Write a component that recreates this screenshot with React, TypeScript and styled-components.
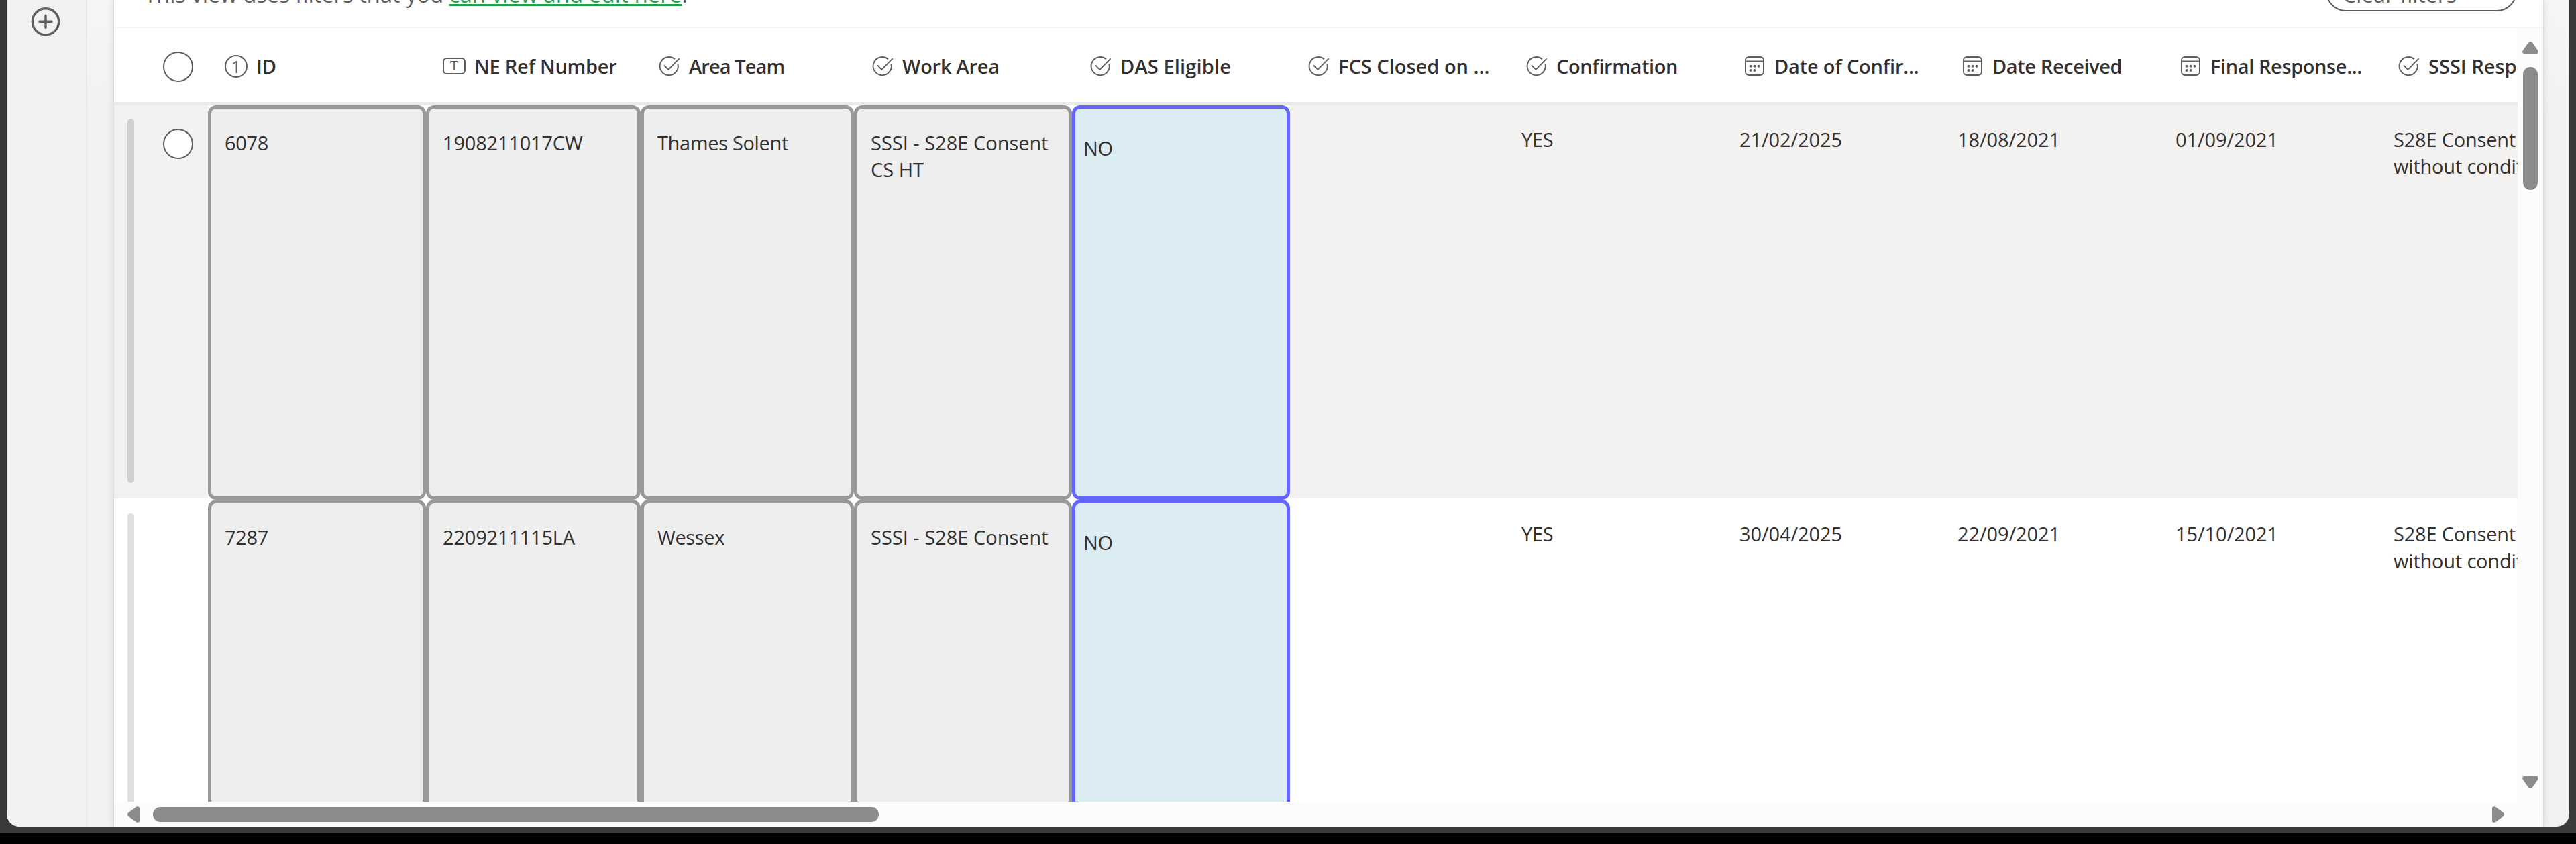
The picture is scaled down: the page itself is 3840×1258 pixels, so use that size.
import React from "react";
import styled, { createGlobalStyle, css } from "styled-components";

const GlobalStyle = createGlobalStyle`
  *, *::before, *::after { box-sizing: border-box; }
  body {
    margin: 0;
    background: #000;
    color: #323130;
    font-family: "Segoe UI", "Open Sans", "Noto Sans", sans-serif;
    font-size: 29px;
    line-height: 40px;
    overflow: hidden;
  }
`;

const Desktop = styled.div`
  width: 3840px;
  height: 1258px;
  background: #000;
`;

const Frame = styled.div`
  height: 1242px;
  padding: 0 10px 10px;
  background: #3a3a3a;
`;

const AppWindow = styled.div`
  display: flex;
  height: 1232px;
  border-radius: 0 0 19px 19px;
  overflow: hidden;
  background: linear-gradient(#f6f6f5 0, #f3f2f1 170px);
`;

const Rail = styled.nav`
  display: flex;
  justify-content: center;
  width: 120px;
  padding: 10px 2px 0 0;
  border-right: 2px solid #ebeae9;
  background: #f3f2f1;
`;

const AddButton = styled.button`
  width: 44px;
  height: 44px;
  padding: 0;
  border: 0;
  background: none;
`;

const Card = styled.main`
  display: flex;
  flex-direction: column;
  width: 3621px;
  margin-left: 40px;
  background: #fff;
  box-shadow: 0 0 12px rgba(0, 0, 0, 0.12), 0 0 3px rgba(0, 0, 0, 0.12);
`;

const FilterBar = styled.div`
  display: flex;
  flex: none;
  justify-content: space-between;
  align-items: flex-start;
  height: 42px;
  padding: 0 39px 0 45px;
  border-bottom: 2px solid #f6f6f6;
  overflow: hidden;
`;

const FilterNote = styled.div`
  margin-top: -31px;
  font-size: 33px;
  line-height: 45px;
  letter-spacing: -0.14px;
  color: #605e5c;
  white-space: nowrap;
`;

const FilterLink = styled.a`
  color: #21a54b;
  letter-spacing: 0.04px;
  text-decoration: underline;
  text-decoration-thickness: 3px;
  text-underline-offset: 2px;
`;

const ClearButton = styled.button`
  width: 285px;
  height: 60px;
  margin-top: -43px;
  padding: 9px 0 0 23px;
  border: 2px solid #605e5c;
  border-radius: 30px;
  background: #fff;
  color: #605e5c;
  font: 400 32px/44px "Segoe UI", "Open Sans", sans-serif;
  text-align: left;
`;

const GridArea = styled.section`
  display: grid;
  grid-template-columns: 3583px 38px;
  grid-template-rows: 1153px 37px;
`;

const Table = styled.div`
  display: flex;
  flex-direction: column;
  overflow: hidden;
`;

const columnTemplate = css`
  display: grid;
  flex: none;
  grid-template-columns: 140px 325px 320px 318px repeat(8, 325px);
`;

const HeaderRow = styled.div`
  ${columnTemplate}
  height: 115px;
  border-bottom: 5px solid #eaeaea;
`;

const HeaderLead = styled.div`
  display: flex;
  align-items: flex-start;
  padding: 35px 0 0 73px;
`;

const HeaderCell = styled.div`
  display: flex;
  align-items: center;
  gap: 11px;
  padding: 3px 0 0 25px;
`;

const HeaderLabel = styled.span<{ $track?: number }>`
  font-weight: 600;
  letter-spacing: ${(p) => p.$track ?? 0}px;
  white-space: nowrap;
`;

const IconSlot = styled.span`
  display: flex;
  flex: none;
  align-items: center;
  width: 36px;
  height: 36px;
  color: #605e5c;
`;

const NumberBadge = styled.span`
  display: flex;
  align-items: center;
  justify-content: center;
  width: 34px;
  height: 34px;
  border: 2px solid currentColor;
  border-radius: 50%;
  font: 400 26px/28px "Segoe UI", "Open Sans", sans-serif;
`;

const TextBadge = styled.span`
  display: flex;
  align-items: center;
  justify-content: center;
  width: 34px;
  height: 25px;
  border: 2px solid currentColor;
  border-radius: 6px;
  font: 400 18px/21px "DejaVu Serif", serif;
`;

const Row = styled.div<{ $shaded?: boolean }>`
  ${columnTemplate}
  height: 588px;
  --row-bg: ${(p) => (p.$shaded ? "#f3f2f1" : "#fff")};
  --row-bar: ${(p) => (p.$shaded ? "#d0d0cf" : "#e0dfde")};
`;

const RowLead = styled.div`
  display: flex;
  align-items: flex-start;
  height: 586px;
  padding: 20px 0 0 20px;
  background: var(--row-bg);
`;

const DragBar = styled.div`
  width: 10px;
  height: 543px;
  border-radius: 5px;
  background: var(--row-bar);
`;

const SelectCircle = styled.span<{ $inRow?: boolean }>`
  width: 45px;
  height: 45px;
  margin: ${(p) => (p.$inRow ? "15px 0 0 43px" : "0")};
  border: 2px solid #5f5e5c;
  border-radius: 50%;
  background: #fff;
`;

type Kind = "locked" | "focus" | "plain";

const cellKinds = {
  locked: css`
    padding: 31px 15px 0 20px;
    border: 5px solid #999;
    border-radius: 12px;
    background: #eee;
  `,
  focus: css`
    padding: 39px 11px 0 12px;
    border: 5px solid #6464ff;
    border-radius: 12px;
    background: #dcecf3;
  `,
  plain: css`
    height: 586px;
    padding: 31px 20px 0 20px;
    background: var(--row-bg);
  `,
};

const Cell = styled.div<{ $kind: Kind; $track?: number }>`
  letter-spacing: ${(p) => p.$track ?? 0}px;
  ${(p) => cellKinds[p.$kind]}
`;

const VerticalTrack = styled.div`
  display: flex;
  flex-direction: column;
  align-items: center;
  padding: 20px 0;
  background: #fcfcfc;
`;

const VerticalThumb = styled.div`
  width: 22px;
  height: 183px;
  margin: 20px 0 auto;
  border-radius: 11px;
  background: #8b8b8b;
`;

const HorizontalTrack = styled.div`
  display: flex;
  align-items: center;
  padding: 1px 20px 0 20px;
  background: #fcfcfc;
`;

const HorizontalThumb = styled.div`
  width: 1082px;
  height: 22px;
  margin: 0 auto 0 20px;
  border-radius: 11px;
  background: #8b8b8b;
`;

const TrackCorner = styled.div`
  background: #fcfcfc;
`;

const turns = { up: 0, right: 90, down: 180, left: 270 };

const Arrow = ({ dir }: { dir: keyof typeof turns }) => {
  const upright = dir === "up" || dir === "down";
  return (
    <svg
      width={upright ? 24 : 18}
      height={upright ? 18 : 24}
      viewBox={upright ? "-12 -9 24 18" : "-9 -12 18 24"}
      fill="#8b8b8b"
    >
      <path
        transform={`rotate(${turns[dir]})`}
        d="M-3 -7.4Q0 -10.6 3 -7.4L11.4 4.4Q13 8.6 9 9H-9Q-13 8.6 -11.4 4.4Z"
      />
    </svg>
  );
};

const ChoiceIcon = () => (
  <svg width="36" height="36" viewBox="0 0 36 36" fill="none" stroke="currentColor" strokeWidth="1.9">
    <path d="M25.9 7.2A13.6 13.6 0 1 0 30.4 14.4" />
    <path d="M10 16.4L16.4 22.9L32.6 6.4" />
  </svg>
);

const CalendarIcon = () => (
  <svg width="36" height="36" viewBox="0 0 36 36" fill="none" stroke="currentColor" strokeWidth="2">
    <rect x="4" y="4" width="27" height="27" rx="5" />
    <path d="M4 10.5H31" />
    <g fill="currentColor" stroke="none">
      <circle cx="11.5" cy="17.8" r="2" />
      <circle cx="17.5" cy="17.8" r="2" />
      <circle cx="23.5" cy="17.8" r="2" />
      <circle cx="11.5" cy="24" r="2" />
      <circle cx="17.5" cy="24" r="2" />
    </g>
  </svg>
);

const PlusCircleIcon = () => (
  <svg width="44" height="44" viewBox="0 0 44 44" fill="none" stroke="#605e5c" strokeWidth="3.4" strokeLinecap="round">
    <circle cx="22" cy="22.3" r="19.6" />
    <path d="M22 13.3V31.3M13 22.3H31" />
  </svg>
);

const icons = {
  number: <NumberBadge>1</NumberBadge>,
  text: <TextBadge>T</TextBadge>,
  choice: <ChoiceIcon />,
  date: <CalendarIcon />,
};

type Column = { label: string; icon: keyof typeof icons; kind: Kind; track?: number };

const columns: Column[] = [
  { label: "ID", icon: "number", kind: "locked" },
  { label: "NE Ref Number", icon: "text", kind: "locked", track: -0.25 },
  { label: "Area Team", icon: "choice", kind: "locked", track: -0.9 },
  { label: "Work Area", icon: "choice", kind: "locked", track: -0.25 },
  { label: "DAS Eligible", icon: "choice", kind: "focus", track: 0.15 },
  { label: "FCS Closed on ...", icon: "choice", kind: "plain", track: 0 },
  { label: "Confirmation", icon: "choice", kind: "plain", track: -0.4 },
  { label: "Date of Confir...", icon: "date", kind: "plain", track: -0.2 },
  { label: "Date Received", icon: "date", kind: "plain", track: -0.4 },
  { label: "Final Response...", icon: "date", kind: "plain", track: -0.4 },
  { label: "SSSI Response", icon: "choice", kind: "plain" },
];

const cellTracks = [-0.3, -0.2, -0.35, 0, -0.3, 0, -0.3, -0.1, -0.1, -0.1, -0.2];

const rows = [
  {
    selectable: true,
    values: ["6078", "1908211017CW", "Thames Solent", "SSSI - S28E Consent CS HT", "NO", "", "YES",
      "21/02/2025", "18/08/2021", "01/09/2021", "S28E Consent without conditions"],
  },
  {
    selectable: false,
    values: ["7287", "2209211115LA", "Wessex", "SSSI - S28E Consent", "NO", "", "YES",
      "30/04/2025", "22/09/2021", "15/10/2021", "S28E Consent without conditions"],
  },
];

export default function App() {
  return (
    <Desktop>
      <GlobalStyle />
      <Frame>
        <AppWindow>
          <Rail>
            <AddButton aria-label="Add">
              <PlusCircleIcon />
            </AddButton>
          </Rail>
          <Card>
            <FilterBar>
              <FilterNote>
                This view uses filters that you <FilterLink>can view and edit here</FilterLink>.
              </FilterNote>
              <ClearButton>Clear filters</ClearButton>
            </FilterBar>
            <GridArea>
              <Table>
                <HeaderRow>
                  <HeaderLead>
                    <SelectCircle />
                  </HeaderLead>
                  {columns.map((c) => (
                    <HeaderCell key={c.label}>
                      <IconSlot>{icons[c.icon]}</IconSlot>
                      <HeaderLabel $track={c.track}>{c.label}</HeaderLabel>
                    </HeaderCell>
                  ))}
                </HeaderRow>
                {rows.map((row) => (
                  <Row key={row.values[0]} $shaded={row.selectable}>
                    <RowLead>
                      <DragBar />
                      {row.selectable && <SelectCircle $inRow />}
                    </RowLead>
                    {row.values.map((v, i) => (
                      <Cell key={columns[i].label} $kind={columns[i].kind} $track={cellTracks[i]}>
                        {v}
                      </Cell>
                    ))}
                  </Row>
                ))}
              </Table>
              <VerticalTrack>
                <Arrow dir="up" />
                <VerticalThumb />
                <Arrow dir="down" />
              </VerticalTrack>
              <HorizontalTrack>
                <Arrow dir="left" />
                <HorizontalThumb />
                <Arrow dir="right" />
              </HorizontalTrack>
              <TrackCorner />
            </GridArea>
          </Card>
        </AppWindow>
      </Frame>
    </Desktop>
  );
}
